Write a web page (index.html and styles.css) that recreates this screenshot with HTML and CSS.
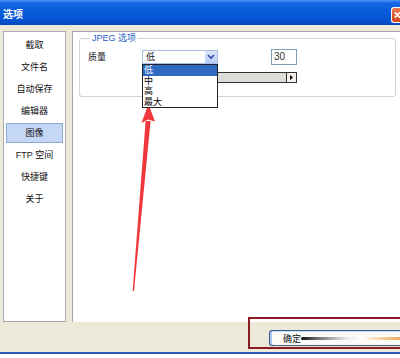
FILE: index.html
```html
<!DOCTYPE html>
<html lang="zh-CN">
<head>
    <meta charset="UTF-8">
    <title>选项</title>
    <link rel="stylesheet" href="styles.css">
</head>
<body>

    <div class="window">
        <div class="titlebar">
            <span class="title">选项</span>
            <span class="close">
                <svg width="8" height="10" viewBox="0 0 8 10"><path d="M2 2 L8 8 M8 2 L2 8" stroke="#fff" stroke-width="1.8"/></svg>
            </span>
        </div>

        <div class="client">
            <div class="main">
                <ul class="sidebar">
                    <li>截取</li>
                    <li>文件名</li>
                    <li>自动保存</li>
                    <li>编辑器</li>
                    <li class="selected">图像</li>
                    <li>FTP 空间</li>
                    <li>快捷键</li>
                    <li>关于</li>
                </ul>

                <div class="pane">
                    <fieldset class="group">
                        <legend>JPEG 选项</legend>
                        <div class="row">
                            <span class="label">质量</span>
                            <div class="controls">
                                <div class="top-line">
                                    <div class="combo">
                                        <span class="combo-value">低</span>
                                        <span class="combo-btn">
                                            <svg width="8" height="6" viewBox="0 0 8 6"><path d="M1 1 L4 4 L7 1" fill="none" stroke="#2d4fa0" stroke-width="1.6"/></svg>
                                        </span>
                                        <ul class="combo-list">
                                            <li class="active">低</li>
                                            <li>中</li>
                                            <li>高</li>
                                            <li>最大</li>
                                        </ul>
                                    </div>
                                    <div class="number">30</div>
                                </div>
                                <div class="slider">
                                    <span class="slider-track"></span>
                                    <span class="slider-btn">
                                        <svg width="4" height="5" viewBox="0 0 4 5"><path d="M0 0 L3 2.5 L0 5 Z" fill="#000"/></svg>
                                    </span>
                                </div>
                            </div>
                        </div>
                    </fieldset>
                </div>
            </div>

            <div class="footer">
                <div class="ok-btn">
                    <span>确定</span>
                    <span class="streak"></span>
                </div>
            </div>
        </div>
        <div class="frame-bottom"></div>
    </div>

    <!-- annotations drawn on top of the screenshot -->
    <div class="mark-box"></div>
    <svg class="arrow" width="400" height="358" viewBox="0 0 400 358">
        <path d="M132.6 291 L145.6 121 L150.6 121 L134 291 Z" fill="#f0383c"/>
        <path d="M141.5 123 L148.4 104 L155 121.5 L148 119.5 Z" fill="#f0383c"/>
    </svg>

</body>
</html>
```

FILE: styles.css
```css
body {
    margin: 0;
    width: 400px;
    height: 358px;
    overflow: hidden;
    background: #fff;
    font-family: "Liberation Sans", "Noto Sans CJK SC", sans-serif;
    font-size: 9px;
    color: #111;
    position: relative;
}
ul {
    list-style: none;
    margin: 0;
    padding: 0;
}
.titlebar {
    height: 25px;
    display: flex;
    align-items: center;
    justify-content: space-between;
    padding-left: 3px;
    background: linear-gradient(#4d97f5 0, #1466e6 3px, #0a5ddb 40%, #0553d2 80%, #0748bd 100%);
    color: #fff;
    font-size: 10px;
    font-weight: bold;
}
.title {
    position: relative;
    top: 1px;
}
.close {
    width: 7px;
    height: 14px;
    margin-top: 4px;
    border: 1px solid #fff;
    border-right: none;
    border-radius: 3px 0 0 3px;
    background: linear-gradient(#e8774d, #d6461f);
    display: flex;
    align-items: center;
    padding-left: 1px;
    overflow: hidden;
}
.client {
    height: 321px;
    padding: 6px 0 0 3px;
    background: #ece9d8;
    display: flex;
    flex-direction: column;
}
.main {
    display: flex;
    gap: 6px;
    height: 291px;
}
.sidebar {
    width: 61px;
    border: 1px solid #a9abb0;
    background: #fff;
    padding-top: 1px;
}
.sidebar li {
    height: 18px;
    line-height: 18px;
    margin: 2px 2px;
    text-align: center;
    border: 1px solid transparent;
}
.sidebar li.selected {
    background: #c4d7f4;
    border-color: #8eaad4;
}
.pane {
    flex: 1;
    background: #fff;
    border-top: 1px solid #a6a6a6;
    border-left: 1px solid #a6a6a6;
}
.group {
    margin: 1px 4px 0 6px;
    padding: 6px 8px 13px 8px;
    border: 1px solid #d6d3c7;
    border-radius: 3px;
    min-inline-size: 0;
}
.group legend {
    color: #2a5cc6;
    padding: 0 2px;
    margin-left: 2px;
    line-height: 10px;
}
.row {
    display: flex;
}
.label {
    width: 54px;
    line-height: 16px;
}
.controls {
    width: 155px;
}
.top-line {
    display: flex;
    justify-content: space-between;
    align-items: flex-start;
}
.combo {
    position: relative;
    width: 74px;
    height: 12px;
    margin-top: 1px;
    border: 1px solid #a9bde0;
    display: flex;
    justify-content: space-between;
    z-index: 2;
}
.combo-value {
    padding-left: 3px;
    line-height: 12px;
}
.combo-btn {
    width: 12px;
    height: 12px;
    background: linear-gradient(#dbe6fd, #b9cdf6);
    display: flex;
    align-items: center;
    justify-content: center;
}
.combo-list {
    position: absolute;
    left: -1px;
    top: 13px;
    width: 74px;
    border: 1px solid #222;
    background: #fff;
    color: #000;
}
.combo-list li {
    height: 10.5px;
    line-height: 10.5px;
    padding-left: 1px;
}
.combo-list li.active {
    background: #316ac5;
    color: #fff;
}
.number {
    width: 22px;
    height: 14px;
    border: 1px solid #7f9db9;
    padding-left: 2px;
    line-height: 14px;
    font-size: 10px;
    color: #333;
}
.slider {
    display: flex;
    height: 9px;
    margin-top: 7px;
    border: 1px solid #333;
}
.slider-track {
    flex: 1;
    background: #dedcd6;
}
.slider-btn {
    width: 9px;
    border-left: 1px solid #333;
    background: #f2f0e8;
    display: flex;
    align-items: center;
    justify-content: center;
}
.footer {
    flex: 1;
    padding-top: 8px;
}
.ok-btn {
    width: 118px;
    height: 14px;
    margin-left: 266px;
    border: 1px solid #3b5d8a;
    border-right: none;
    border-radius: 3px 0 0 3px;
    background: #fbfbf7;
    box-shadow: inset 2px 0 0 #a8c8f0, inset 0 1px 0 #c5dcf8;
    display: flex;
    align-items: center;
    padding-left: 13px;
    font-size: 9px;
}
.streak {
    flex: 1;
    height: 3px;
    margin-top: 1px;
    border-radius: 2px 0 0 2px;
    background: linear-gradient(to right, #111 0, #777 18%, #e8e8e8 45%, #fff 60%, #f6c690 85%, #f0a860 100%);
}
.frame-bottom {
    height: 2px;
    background: #2c5cb8;
}
.mark-box {
    position: absolute;
    left: 248px;
    top: 317px;
    width: 150px;
    height: 28px;
    border: 2px solid #8b1b22;
    border-right: none;
}
.arrow {
    position: absolute;
    left: 0;
    top: 0;
    pointer-events: none;
}
```
